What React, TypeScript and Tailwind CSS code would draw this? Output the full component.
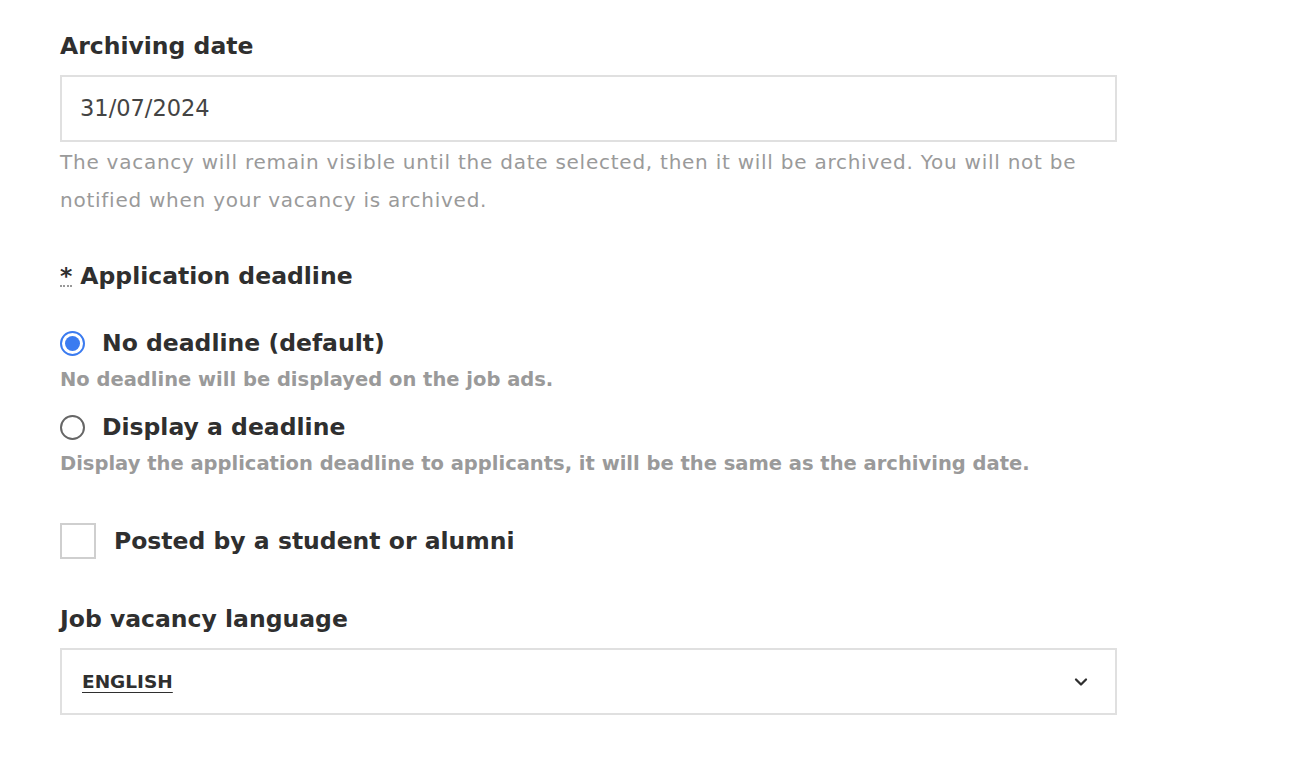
import { ChevronDown } from 'lucide-react'

export default function App() {
  return (
    <div className="min-h-screen bg-white font-['DejaVu_Sans','Noto_Sans',sans-serif] text-[#2f2f2f]">
      <div className="w-[1057px] ml-[60px] pt-[30px]">
        {/* Archiving date */}
        <label className="block text-[23.5px] font-bold leading-[32px]">Archiving date</label>
        <div className="mt-[13px] h-[67px] border-2 border-[#e0e0e0] flex items-center px-[18px] text-[22.5px] text-[#444]">
          31/07/2024
        </div>
        <p className="mt-[1px] text-[20px] tracking-[0.75px] leading-[38px] text-[#9a9a9a] pr-[30px]">
          The vacancy will remain visible until the date selected, then it will be archived. You will not be notified
          when your vacancy is archived.
        </p>

        {/* Application deadline */}
        <div className="mt-[41px] text-[23.5px] font-bold leading-[32px] flex items-baseline gap-[8px]">
          <abbr title="required" className="no-underline border-b-2 border-dotted border-[#999] leading-[18px]">*</abbr>
          <span>Application deadline</span>
        </div>

        <div className="mt-[35px]">
          <label className="flex items-center gap-[17px]">
            <span className="w-[25px] h-[25px] rounded-full border-2 border-[#3b7bf0] flex items-center justify-center">
              <span className="w-[15px] h-[15px] rounded-full bg-[#3b7bf0]" />
            </span>
            <span className="text-[23.5px] font-bold leading-[32px]">No deadline (default)</span>
          </label>
          <p className="mt-[9px] text-[19.5px] font-bold text-[#9a9a9a] leading-[24px]">
            No deadline will be displayed on the job ads.
          </p>
        </div>

        <div className="mt-[19px]">
          <label className="flex items-center gap-[17px]">
            <span className="w-[25px] h-[25px] rounded-full border-2 border-[#666]" />
            <span className="text-[23.5px] font-bold leading-[32px]">Display a deadline</span>
          </label>
          <p className="mt-[9px] text-[19.5px] font-bold text-[#9a9a9a] leading-[24px]">
            Display the application deadline to applicants, it will be the same as the archiving date.
          </p>
        </div>

        {/* Student checkbox */}
        <label className="mt-[47px] flex items-center gap-[18px]">
          <span className="w-[36px] h-[36px] border-2 border-[#cfcfcf]" />
          <span className="text-[23.5px] font-bold leading-[32px]">Posted by a student or alumni</span>
        </label>

        {/* Language */}
        <label className="mt-[44px] block text-[23.5px] font-bold leading-[32px]">Job vacancy language</label>
        <div className="mt-[13px] h-[67px] border-2 border-[#e0e0e0] flex items-center justify-between pl-[20px] pr-[24px]">
          <span className="text-[18.5px] font-bold underline underline-offset-[4px] text-[#2f2f2f]">ENGLISH</span>
          <ChevronDown className="w-[20px] h-[20px] text-[#2f2f2f]" strokeWidth={2.75} />
        </div>
      </div>
    </div>
  )
}
